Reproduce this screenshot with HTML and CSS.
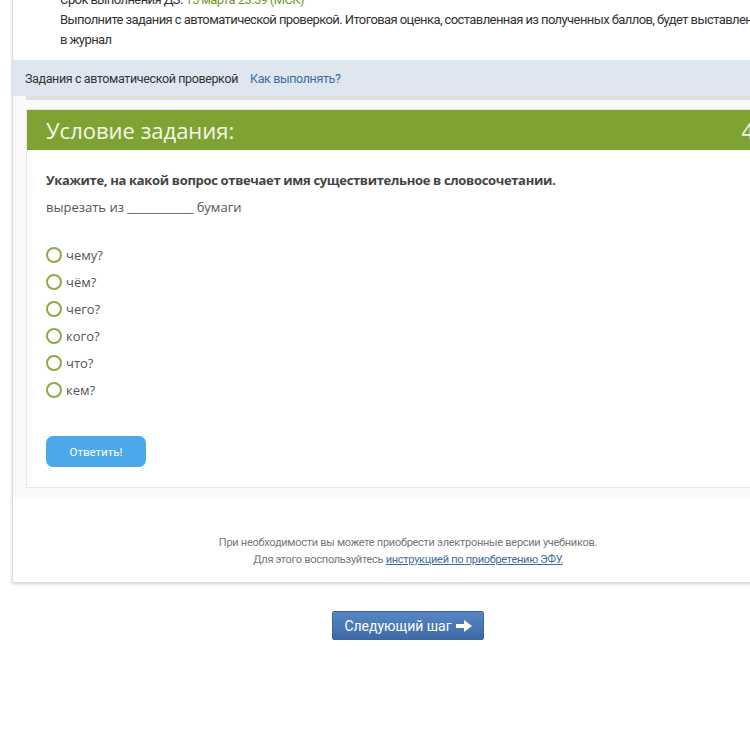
FILE: index.html
```html
<!DOCTYPE html>
<html lang="ru">
<head>
    <meta charset="UTF-8">
    <title>Домашнее задание</title>
    <link rel="stylesheet" href="styles.css">
</head>
<body>
    <div class="page">
        <div class="panel">
            <!-- Intro -->
            <div class="intro">
                <p>Срок выполнения ДЗ: <span class="deadline">15 марта 23:59 (МСК)</span></p>
                <p>Выполните задания с автоматической проверкой. Итоговая оценка, составленная из полученных баллов, будет выставлена в журнал</p>
            </div>

            <!-- Info bar -->
            <div class="info-bar">
                <span>Задания с автоматической проверкой</span>
                <a href="#" class="how-link">Как выполнять?</a>
            </div>

            <!-- Task -->
            <div class="task-area">
                <div class="task-wrap">
                    <div class="task-card">
                        <div class="task-header">
                            <h2>Условие задания:</h2>
                            <span class="points">4</span>
                        </div>
                        <div class="task-body">
                            <p class="question">Укажите, на какой вопрос отвечает имя существительное в словосочетании.</p>
                            <p class="phrase">вырезать из <span class="gap">____________</span> бумаги</p>

                            <ul class="answers">
                                <li><span class="radio"></span>чему?</li>
                                <li><span class="radio"></span>чём?</li>
                                <li><span class="radio"></span>чего?</li>
                                <li><span class="radio"></span>кого?</li>
                                <li><span class="radio"></span>что?</li>
                                <li><span class="radio"></span>кем?</li>
                            </ul>

                            <button type="button" class="answer-btn">Ответить!</button>
                        </div>
                    </div>
                </div>
            </div>

            <!-- Footer -->
            <div class="footer">
                <p>При необходимости вы можете приобрести электронные версии учебников.</p>
                <p>Для этого воспользуйтесь <a href="#">инструкцией по приобретению ЭФУ.</a></p>
            </div>
        </div>

        <div class="next">
            <button type="button" class="next-btn">Следующий шаг
                <svg width="16" height="12" viewBox="0 0 16 12"><path d="M0 4h8V0l8 6-8 6V8H0z" fill="#fff"/></svg>
            </button>
        </div>
    </div>
</body>
</html>
```

FILE: styles.css
```css
/* General */
html, body {
    overflow: hidden;
}

body {
    margin: 0;
    background-color: #ffffff;
    font-family: Roboto, "Liberation Sans", sans-serif;
    color: #333;
}

p {
    margin: 0;
}

.page {
    width: 792px;
    margin: -21px 0 0 12px;
}

.panel {
    background-color: #fff;
    border: 1px solid #dcdcdc;
    box-shadow: 0 1px 3px rgba(0, 0, 0, 0.18);
}

/* Intro */
.intro {
    padding: 10px 40px 10px 47px;
    font-size: 13px;
    line-height: 20px;
    letter-spacing: -0.045em;
}

.deadline {
    color: #6e9a2c;
}

/* Info bar */
.info-bar {
    display: flex;
    gap: 12px;
    align-items: center;
    height: 36px;
    padding-left: 12px;
    background-color: #dee7f0;
    font-size: 12.5px;
    letter-spacing: -0.03em;
}

.how-link {
    color: #3d6b9f;
    text-decoration: none;
}

/* Task */
.task-area {
    background-color: #f9f9f9;
    padding: 0 0 10px 13px;
}

.task-wrap {
    border-top: 4px solid #e0e0e0;
    padding-top: 9px;
}

.task-card {
    background-color: #fff;
    border: 1px solid #e6e6e6;
}

.task-header {
    display: flex;
    justify-content: space-between;
    align-items: center;
    height: 40px;
    padding: 0 48px 0 19px;
    background-color: #7fa332;
    color: #f4f8e8;
    font-family: "Open Sans", sans-serif;
    font-size: 22px;
}

.task-header h2 {
    margin: 0;
    font-size: 22px;
    font-weight: 400;
}

.task-body {
    padding: 20px 19px 20px 19px;
    font-family: "Open Sans", sans-serif;
    font-size: 13px;
    line-height: 20px;
    color: #555;
}

.question {
    font-weight: 700;
    color: #444;
    letter-spacing: -0.33px;
}

.phrase {
    margin-top: 7px;
}

.gap {
    letter-spacing: -0.2px;
}

.answers {
    list-style: none;
    margin: 24px 0 0;
    padding: 0;
}

.answers li {
    display: flex;
    align-items: center;
    gap: 4px;
    height: 27px;
}

.radio {
    width: 12px;
    height: 12px;
    border: 2px solid #8cab44;
    border-radius: 50%;
    background-color: #fff;
}

.answer-btn {
    margin-top: 33px;
    width: 100px;
    height: 31px;
    border: none;
    border-radius: 7px;
    background-color: #4ba9e9;
    color: #fff;
    font-family: Roboto, sans-serif;
    font-size: 11.5px;
    cursor: pointer;
}

/* Footer */
.footer {
    padding: 36px 0 14px;
    text-align: center;
    font-size: 11px;
    line-height: 17px;
    letter-spacing: -0.025em;
    color: #777;
}

.footer a {
    color: #3d6b9f;
}

/* Next step */
.next {
    display: flex;
    justify-content: center;
    margin-top: 28px;
}

.next-btn {
    display: flex;
    align-items: center;
    gap: 4px;
    width: 152px;
    height: 29px;
    justify-content: center;
    border: 1px solid #3b669f;
    border-radius: 2px;
    background: linear-gradient(#5686c4, #3e6ba8);
    color: #fff;
    font-family: Roboto, sans-serif;
    font-size: 14px;
    cursor: pointer;
}
```
